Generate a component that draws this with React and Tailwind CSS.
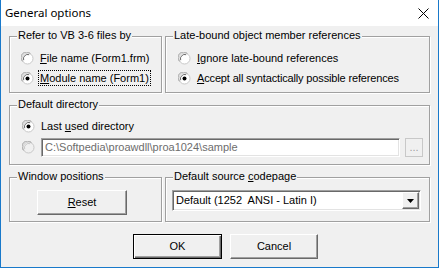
import React from "react";

const font = { fontFamily: '"Liberation Sans", Arial, sans-serif' };

const Radio = ({ checked, disabled }) => (
  <svg width="13" height="13" viewBox="0 0 13 13" className="shrink-0">
    <circle cx="6.5" cy="6.5" r="5.5" fill={disabled ? "#f0f0f0" : "#fff"} stroke="#c8c8c8" strokeWidth="1" />
    <path d="M1.6 9.4 A5.5 5.5 0 0 1 9.4 1.6" fill="none" stroke="#a0a0a0" strokeWidth="1" />
    <path d="M2.7 8.2 A4.3 4.3 0 0 1 8.2 2.7" fill="none" stroke={disabled ? "#c8c8c8" : "#696969"} strokeWidth="1" />
    {checked && <circle cx="6.5" cy="6.5" r="2" fill="#000" />}
  </svg>
);

const Group = ({ label, className, children }) => (
  <div className={`relative border border-[#a0a0a0] shadow-[inset_1px_1px_0_#fff,1px_1px_0_#fff] ${className}`}>
    <span className="absolute -top-[8px] left-[7px] px-[1px] bg-[#f0f0f0] leading-[13px]">{label}</span>
    {children}
  </div>
);

const U = ({ children }) => <span className="underline underline-offset-[1px]">{children}</span>;

export default function App() {
  return (
    <div style={font} className="w-[439px] h-[268px] flex flex-col bg-[#f0f0f0] border border-t-0 border-[#1979ca] text-[11px] text-black overflow-hidden">
      {/* Title bar */}
      <div className="h-[26px] bg-white flex items-center justify-between pl-[4px] pr-[9px] shrink-0">
        <span style={{ fontFamily: '"Noto Sans", "Open Sans", sans-serif' }} className="text-[11.5px]">General options</span>
        <svg width="11" height="11" viewBox="0 0 11 11">
          <path d="M0.5 0.5 L10.5 10.5 M10.5 0.5 L0.5 10.5" stroke="#000" strokeWidth="1" />
        </svg>
      </div>

      <div className="flex flex-col px-[8px] pt-[10px]">
        {/* Row 1 */}
        <div className="flex gap-[3px] h-[57px]">
          <Group label="Refer to VB 3-6 files by" className="w-[153px] pl-[11px] pt-[11px]">
            <div className="h-[20px] flex items-center gap-[6px]">
              <Radio />
              <span><U>F</U>ile name (Form1.frm)</span>
            </div>
            <div className="h-[20px] flex items-center gap-[5px]">
              <Radio checked />
              <span className="outline outline-1 outline-dotted outline-black px-[1px] leading-[14px]"><U>M</U>odule name (Form1)</span>
            </div>
          </Group>
          <Group label="Late-bound object member references" className="flex-1 pl-[12px] pt-[11px]">
            <div className="h-[20px] flex items-center gap-[6px]">
              <Radio />
              <span><U>I</U>gnore late-bound references</span>
            </div>
            <div className="h-[20px] flex items-center gap-[6px]">
              <Radio checked />
              <span className="tracking-[-0.15px]"><U>A</U>ccept all syntactically possible references</span>
            </div>
          </Group>
        </div>

        {/* Row 2 */}
        <Group label="Default directory" className="mt-[12px] h-[60px] pl-[12px] pr-[6px] pt-[10px]">
          <div className="h-[20px] flex items-center gap-[6px]">
            <Radio checked />
            <span>Last <U>u</U>sed directory</span>
          </div>
          <div className="mt-[2px] flex items-center">
            <Radio disabled />
            <div className="ml-[6px] flex-1 h-[19px] flex items-center pl-[3px] bg-white border border-t-[#a0a0a0] border-l-[#a0a0a0] border-r-white border-b-white shadow-[inset_1px_1px_0_#696969,inset_-1px_-1px_0_#e3e3e3] text-[#6d6d6d]">
              C:\Softpedia\proawdll\proa1024\sample
            </div>
            <div className="ml-[5px] w-[18px] h-[19px] flex items-end justify-center pb-[3px] border border-[#c8c8c8] bg-[#f0f0f0] text-[#a0a0a0] leading-none">...</div>
          </div>
        </Group>

        {/* Row 3 */}
        <div className="mt-[12px] flex gap-[3px] h-[45px]">
          <Group label="Window positions" className="w-[153px] pl-[27px] pt-[12px]">
            <button className="w-[90px] h-[25px] bg-[#f0f0f0] border border-t-white border-l-white border-r-[#696969] border-b-[#696969] shadow-[inset_-1px_-1px_0_#a0a0a0]">
              <U>R</U>eset
            </button>
          </Group>
          <Group label={<span>Default source <U>c</U>odepage</span>} className="flex-1 pl-[6px] pr-[8px] pt-[12px]">
            <div className="h-[21px] flex items-center bg-white border border-t-[#a0a0a0] border-l-[#a0a0a0] border-r-white border-b-white shadow-[inset_1px_1px_0_#696969,inset_-1px_-1px_0_#e3e3e3]">
              <span className="flex-1 pl-[3px]">Default (1252&nbsp; ANSI - Latin I)</span>
              <div className="w-[17px] h-[17px] mr-[1px] flex items-center justify-center bg-[#f0f0f0] border border-t-white border-l-white border-r-[#696969] border-b-[#696969] shadow-[inset_-1px_-1px_0_#a0a0a0]">
                <svg width="7" height="4" viewBox="0 0 7 4"><path d="M0 0 H7 L3.5 4 Z" fill="#000" /></svg>
              </div>
            </div>
          </Group>
        </div>

        {/* Buttons */}
        <div className="mt-[12px] flex gap-[8px] pl-[124px]">
          <button className="w-[89px] h-[25px] bg-[#f0f0f0] border border-black shadow-[inset_1px_1px_0_#fff,inset_-1px_-1px_0_#696969,inset_-2px_-2px_0_#a0a0a0]">OK</button>
          <button className="w-[88px] h-[25px] bg-[#f0f0f0] border border-t-white border-l-white border-r-[#696969] border-b-[#696969] shadow-[inset_-1px_-1px_0_#a0a0a0]">Cancel</button>
        </div>
      </div>
    </div>
  );
}
